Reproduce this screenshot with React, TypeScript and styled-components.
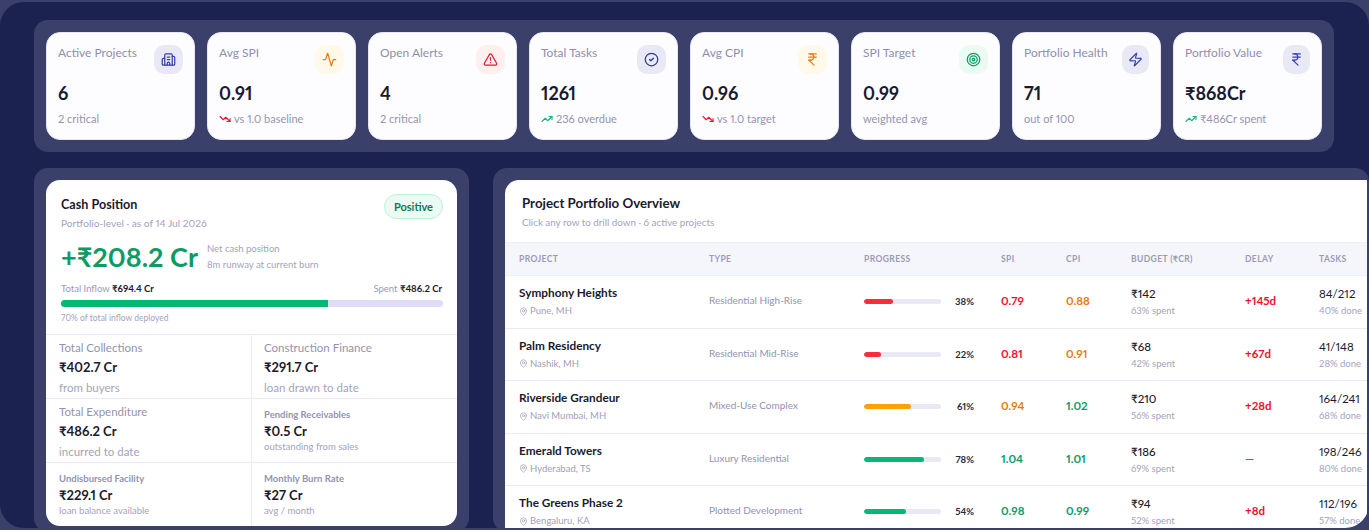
import React from 'react';
import styled, { createGlobalStyle } from 'styled-components';
import {
  Building2,
  Activity,
  TriangleAlert,
  CircleCheck,
  IndianRupee,
  Target,
  Zap,
  TrendingUp,
  TrendingDown,
  MapPin,
} from 'lucide-react';

const GlobalStyle = createGlobalStyle`
  * {
    margin: 0;
    padding: 0;
    box-sizing: border-box;
  }

  html, body, #root {
    height: 100%;
  }

  body {
    font-family: 'Lato', 'Noto Sans', sans-serif;
    font-variant-numeric: proportional-nums;
    background: #3a406a;
    color: #1a1a2e;
    overflow: hidden;
  }
`;

const Frame = styled.div`
  width: 1369px;
  height: 526px;
  margin-top: 2px;
  overflow: hidden;
  background: #1b2250;
  border-radius: 24px;
  padding: 18px 0 0 34px;
  display: flex;
  flex-direction: column;
  gap: 16px;
`;

const KpiStrip = styled.div`
  width: 1300px;
  height: 132px;
  flex: none;
  display: grid;
  grid-template-columns: repeat(8, 149px);
  gap: 12px;
  padding: 12px;
  background: #3a406a;
  border-radius: 14px;
`;

const KpiCard = styled.div`
  background: #fdfdff;
  border: 1px solid #e6e6f2;
  border-radius: 14px;
  padding: 12px 11px 0;
  display: flex;
  flex-direction: column;
`;

const KpiTop = styled.div`
  display: flex;
  justify-content: space-between;
  align-items: flex-start;
  height: 30px;
`;

const KpiLabel = styled.div`
  font-size: 12px;
  color: #8f8fab;
  line-height: 15px;
`;

const IconTile = styled.div<{ $tone: string; $narrow?: boolean }>`
  width: ${(p) => (p.$narrow ? 27 : 29)}px;
  height: 29px;
  border-radius: 10px;
  flex: none;
  display: flex;
  align-items: center;
  justify-content: center;
  background: ${(p) => p.$tone};
`;

const KpiValue = styled.div`
  margin-top: 6px;
  font-size: 18px;
  line-height: 24px;
  font-weight: 700;
  color: #1a1a2e;
`;

const KpiNote = styled.div`
  margin-top: 6px;
  font-size: 11px;
  line-height: 16px;
  color: #9494ae;
  display: flex;
  align-items: center;
  gap: 3px;
`;

const Lower = styled.div`
  display: flex;
  gap: 24px;
  align-items: flex-start;
`;

const Shell = styled.div<{ $width: number }>`
  width: ${(p) => p.$width}px;
  flex: none;
  background: #3a406a;
  border-radius: 14px;
  padding: 12px 12px 0;
  height: 364px;
`;

const CashCard = styled.div`
  background: #ffffff;
  border-radius: 14px;
  height: 346px;
  overflow: hidden;
`;

const CashHead = styled.div`
  padding: 16px 14px 0 15px;
  height: 155px;
  border-bottom: 1px solid #eaeaf6;
`;

const CashTitleRow = styled.div`
  display: flex;
  justify-content: space-between;
  align-items: flex-start;
`;

const CardTitle = styled.div`
  font-size: 12.6px;
  line-height: 17px;
  font-weight: 700;
  color: #1a1a2e;
`;

const TableTitle = styled(CardTitle)`
  font-size: 13.3px;
`;

const CardSub = styled.div`
  margin-top: 3px;
  font-size: 10.2px;
  line-height: 15px;
  color: #a3a3bb;
`;

const TableSub = styled(CardSub)`
  font-size: 9.8px;
`;

const Badge = styled.div`
  margin-top: -2px;
  height: 25px;
  padding: 0 9px;
  border-radius: 13px;
  font-size: 11px;
  font-weight: 700;
  line-height: 23px;
  color: #0b7a53;
  background: #ebfbf3;
  border: 1px solid #bdf0d8;
`;

const NetRow = styled.div`
  display: flex;
  align-items: center;
  gap: 9px;
  margin-top: 8px;
`;

const NetValue = styled.div`
  font-size: 27px;
  line-height: 36px;
  font-weight: 700;
  color: #0a9b66;
`;

const NetCaption = styled.div`
  font-size: 9.5px;
  line-height: 16px;
  color: #a3a3bb;
`;

const SplitRow = styled.div`
  display: flex;
  justify-content: space-between;
  margin-top: 7px;
  padding-right: 1px;
  font-size: 9.5px;
  line-height: 14px;
  color: #9a9ab2;
`;

const Strong = styled.b`
  font-weight: 700;
  color: #1a1a2e;
`;

const Track = styled.div<{ $height: number; $tone: string }>`
  height: ${(p) => p.$height}px;
  border-radius: ${(p) => p.$height / 2}px;
  background: ${(p) => p.$tone};
  overflow: hidden;
`;

const Fill = styled.div<{ $tone: string; $round?: boolean }>`
  height: 100%;
  border-radius: ${(p) => (p.$round ? '3px' : '0')};
  background: ${(p) => p.$tone};
`;

const CashTrack = styled(Track)`
  margin-top: 4px;
`;

const CashFoot = styled.div`
  margin-top: 4px;
  font-size: 8.5px;
  line-height: 14px;
  color: #a3a3bb;
`;

const CashGrid = styled.div`
  display: grid;
  grid-template-columns: 206px 1fr;
  grid-auto-rows: 64px;
`;

const CashCell = styled.div<{ $small?: boolean; $right?: boolean; $last?: boolean }>`
  padding: ${(p) => (p.$small ? '10px' : '5px')} 13px 0 ${(p) => (p.$right ? '12px' : '13px')};
  border-right: ${(p) => (p.$right ? 'none' : '1px solid #eaeaf6')};
  border-bottom: ${(p) => (p.$last ? 'none' : '1px solid #eaeaf6')};
`;

const CellLabel = styled.div<{ $small?: boolean }>`
  font-size: ${(p) => (p.$small ? '9.5px' : '11.5px')};
  font-weight: ${(p) => (p.$small ? 700 : 400)};
  line-height: ${(p) => (p.$small ? '12px' : '16px')};
  color: #9393ad;
`;

const CellValue = styled.div<{ $small?: boolean }>`
  margin-top: ${(p) => (p.$small ? '2px' : '3px')};
  font-size: 13px;
  line-height: 17px;
  font-weight: 700;
  color: #1a1a2e;
`;

const CellNote = styled.div<{ $small?: boolean }>`
  margin-top: ${(p) => (p.$small ? '0' : '4px')};
  font-size: ${(p) => (p.$small ? '9.5px' : '11.5px')};
  line-height: ${(p) => (p.$small ? '13px' : '16px')};
  color: #a3a3bb;
`;

const TableCard = styled.div`
  background: #ffffff;
  border-radius: 14px 0 0 0;
  height: 352px;
  width: 862px;
  overflow: hidden;
`;

const TableHead = styled.div`
  height: 62px;
  padding: 15px 17px 0;
`;

const Table = styled.table`
  width: 880px;
  border-collapse: collapse;
  table-layout: fixed;
`;

const Th = styled.th<{ $width: number }>`
  width: ${(p) => p.$width}px;
  height: 33px;
  padding-left: 14px;
  background: #f5f6fb;
  border-top: 1px solid #eef0f6;
  border-bottom: 1px solid #eef0f6;
  font-size: 8.5px;
  font-weight: 700;
  letter-spacing: 0.4px;
  text-align: left;
  color: #9a9ab4;
`;

const Tr = styled.tr`
  height: 52.5px;
  border-bottom: 1px solid #eaeaf4;
`;

const Td = styled.td`
  padding-left: 14px;
  vertical-align: middle;
`;

const ProjectName = styled.div`
  font-size: 11.8px;
  line-height: 16px;
  font-weight: 700;
  color: #1a1a2e;
`;

const Location = styled.div`
  margin-top: 3px;
  display: flex;
  align-items: center;
  gap: 2px;
  font-size: 9.5px;
  line-height: 14px;
  color: #a0a0b8;
`;

const TypeText = styled.div`
  padding-bottom: 3px;
  font-size: 10px;
  color: #9393ad;
`;

const ProgressCell = styled.div`
  display: flex;
  align-items: center;
  height: 14px;
`;

const ProgressTrack = styled(Track)`
  width: 77px;
  flex: none;
`;

const Pct = styled.div`
  width: 33px;
  text-align: right;
  font-size: 9.5px;
  font-weight: 700;
  color: #2a2a3e;
`;

const Metric = styled.div<{ $tone: string }>`
  padding-bottom: 2px;
  font-size: 11.5px;
  font-weight: 700;
  color: ${(p) => p.$tone};
`;

const Main = styled.div<{ $plain?: boolean }>`
  font-size: 11.5px;
  line-height: 16px;
  font-weight: ${(p) => (p.$plain ? 400 : 500)};
  color: #1a1a2e;
`;

const Sub = styled.div`
  margin-top: 2px;
  font-size: 9.5px;
  line-height: 13px;
  color: #a3a3bb;
`;

const RED = '#f0102e';
const ORANGE = '#e97a0c';
const GREEN = '#0a9b66';

const kpis = [
  { label: 'Active Projects', value: '6', note: '2 critical', Icon: Building2, tile: '#e9e9f6', color: '#3a40a8' },
  { label: 'Avg SPI', value: '0.91', note: 'vs 1.0 baseline', Icon: Activity, tile: '#fef9e8', color: '#e97a0c', trend: 'down' },
  { label: 'Open Alerts', value: '4', note: '2 critical', Icon: TriangleAlert, tile: '#fff0f0', color: '#f0102e' },
  { label: 'Total Tasks', value: '1261', note: '236 overdue', Icon: CircleCheck, tile: '#e9e9f6', color: '#2f3694', trend: 'up' },
  { label: 'Avg CPI', value: '0.96', note: 'vs 1.0 target', Icon: IndianRupee, tile: '#fef9e8', color: '#e97a0c', trend: 'down' },
  { label: 'SPI Target', value: '0.99', note: 'weighted avg', Icon: Target, tile: '#ebfbf3', color: '#0a9b66' },
  { label: 'Portfolio Health', value: '71', note: 'out of 100', Icon: Zap, tile: '#e9e9f6', color: '#3a40a8', narrow: true },
  { label: 'Portfolio Value', value: '₹868Cr', note: '₹486Cr spent', Icon: IndianRupee, tile: '#e9e9f6', color: '#3a40a8', trend: 'up', narrow: true },
];

const cashCells = [
  { label: 'Total Collections', value: '₹402.7 Cr', note: 'from buyers' },
  { label: 'Construction Finance', value: '₹291.7 Cr', note: 'loan drawn to date' },
  { label: 'Total Expenditure', value: '₹486.2 Cr', note: 'incurred to date' },
  { label: 'Pending Receivables', value: '₹0.5 Cr', note: 'outstanding from sales', small: true },
  { label: 'Undisbursed Facility', value: '₹229.1 Cr', note: 'loan balance available', small: true },
  { label: 'Monthly Burn Rate', value: '₹27 Cr', note: 'avg / month', small: true },
];

const columns = [
  { title: 'PROJECT', width: 190 },
  { title: 'TYPE', width: 155 },
  { title: 'PROGRESS', width: 137 },
  { title: 'SPI', width: 65 },
  { title: 'CPI', width: 65 },
  { title: 'BUDGET (₹CR)', width: 114 },
  { title: 'DELAY', width: 74 },
  { title: 'TASKS', width: 80 },
];

const projects = [
  { name: 'Symphony Heights', place: 'Pune, MH', type: 'Residential High-Rise', pct: 38, bar: '#fb2c3c', spi: '0.79', spiTone: RED, cpi: '0.88', cpiTone: ORANGE, budget: '₹142', spent: '63% spent', delay: '+145d', delayTone: RED, tasks: '84/212', done: '40% done' },
  { name: 'Palm Residency', place: 'Nashik, MH', type: 'Residential Mid-Rise', pct: 22, bar: '#fb2c3c', spi: '0.81', spiTone: RED, cpi: '0.91', cpiTone: ORANGE, budget: '₹68', spent: '42% spent', delay: '+67d', delayTone: RED, tasks: '41/148', done: '28% done' },
  { name: 'Riverside Grandeur', place: 'Navi Mumbai, MH', type: 'Mixed-Use Complex', pct: 61, bar: '#ff9f0a', spi: '0.94', spiTone: ORANGE, cpi: '1.02', cpiTone: GREEN, budget: '₹210', spent: '56% spent', delay: '+28d', delayTone: RED, tasks: '164/241', done: '68% done' },
  { name: 'Emerald Towers', place: 'Hyderabad, TS', type: 'Luxury Residential', pct: 78, bar: '#05b974', spi: '1.04', spiTone: GREEN, cpi: '1.01', cpiTone: GREEN, budget: '₹186', spent: '69% spent', delay: '—', delayTone: GREEN, tasks: '198/246', done: '80% done' },
  { name: 'The Greens Phase 2', place: 'Bengaluru, KA', type: 'Plotted Development', pct: 54, bar: '#05b974', spi: '0.98', spiTone: GREEN, cpi: '0.99', cpiTone: GREEN, budget: '₹94', spent: '52% spent', delay: '+8d', delayTone: RED, tasks: '112/196', done: '57% done' },
];

export default function App() {
  return (
    <>
      <GlobalStyle />
      <Frame>
        <KpiStrip>
          {kpis.map((k) => (
            <KpiCard key={k.label}>
              <KpiTop>
                <KpiLabel>{k.label}</KpiLabel>
                <IconTile $tone={k.tile} $narrow={k.narrow}>
                  <k.Icon size={15} color={k.color} strokeWidth={2} />
                </IconTile>
              </KpiTop>
              <KpiValue>{k.value}</KpiValue>
              <KpiNote>
                {k.trend === 'up' && <TrendingUp size={12} color="#0fb878" strokeWidth={2.2} />}
                {k.trend === 'down' && <TrendingDown size={12} color="#f0102e" strokeWidth={2.2} />}
                {k.note}
              </KpiNote>
            </KpiCard>
          ))}
        </KpiStrip>
        <Lower>
          <Shell $width={435}>
            <CashCard>
              <CashHead>
                <CashTitleRow>
                  <div>
                    <CardTitle>Cash Position</CardTitle>
                    <CardSub>Portfolio-level · as of 14 Jul 2026</CardSub>
                  </div>
                  <Badge>Positive</Badge>
                </CashTitleRow>
                <NetRow>
                  <NetValue>+₹208.2 Cr</NetValue>
                  <NetCaption>
                    Net cash position
                    <br />
                    8m runway at current burn
                  </NetCaption>
                </NetRow>
                <SplitRow>
                  <span>
                    Total Inflow <Strong>₹694.4 Cr</Strong>
                  </span>
                  <span>
                    Spent <Strong>₹486.2 Cr</Strong>
                  </span>
                </SplitRow>
                <CashTrack $height={7} $tone="#dfdcf6">
                  <Fill $tone="#05b974" style={{ width: '70%' }} />
                </CashTrack>
                <CashFoot>70% of total inflow deployed</CashFoot>
              </CashHead>
              <CashGrid>
                {cashCells.map((c, i) => (
                  <CashCell key={c.label} $small={c.small} $right={i % 2 === 1} $last={i >= 4}>
                    <CellLabel $small={c.small}>{c.label}</CellLabel>
                    <CellValue $small={c.small}>{c.value}</CellValue>
                    <CellNote $small={c.small}>{c.note}</CellNote>
                  </CashCell>
                ))}
              </CashGrid>
            </CashCard>
          </Shell>
          <Shell $width={876}>
            <TableCard>
              <TableHead>
                <TableTitle>Project Portfolio Overview</TableTitle>
                <TableSub>Click any row to drill down · 6 active projects</TableSub>
              </TableHead>
              <Table>
                <thead>
                  <tr>
                    {columns.map((c) => (
                      <Th key={c.title} $width={c.width}>
                        {c.title}
                      </Th>
                    ))}
                  </tr>
                </thead>
                <tbody>
                  {projects.map((p) => (
                    <Tr key={p.name}>
                      <Td>
                        <ProjectName>{p.name}</ProjectName>
                        <Location>
                          <MapPin size={9} color="#a0a0b8" />
                          {p.place}
                        </Location>
                      </Td>
                      <Td>
                        <TypeText>{p.type}</TypeText>
                      </Td>
                      <Td>
                        <ProgressCell>
                          <ProgressTrack $height={5} $tone="#e9e9f6">
                            <Fill $tone={p.bar} $round style={{ width: `${p.pct}%` }} />
                          </ProgressTrack>
                          <Pct>{p.pct}%</Pct>
                        </ProgressCell>
                      </Td>
                      <Td>
                        <Metric $tone={p.spiTone}>{p.spi}</Metric>
                      </Td>
                      <Td>
                        <Metric $tone={p.cpiTone}>{p.cpi}</Metric>
                      </Td>
                      <Td>
                        <Main>{p.budget}</Main>
                        <Sub>{p.spent}</Sub>
                      </Td>
                      <Td>
                        <Metric $tone={p.delayTone}>{p.delay}</Metric>
                      </Td>
                      <Td>
                        <Main $plain>{p.tasks}</Main>
                        <Sub>{p.done}</Sub>
                      </Td>
                    </Tr>
                  ))}
                </tbody>
              </Table>
            </TableCard>
          </Shell>
        </Lower>
      </Frame>
    </>
  );
}
